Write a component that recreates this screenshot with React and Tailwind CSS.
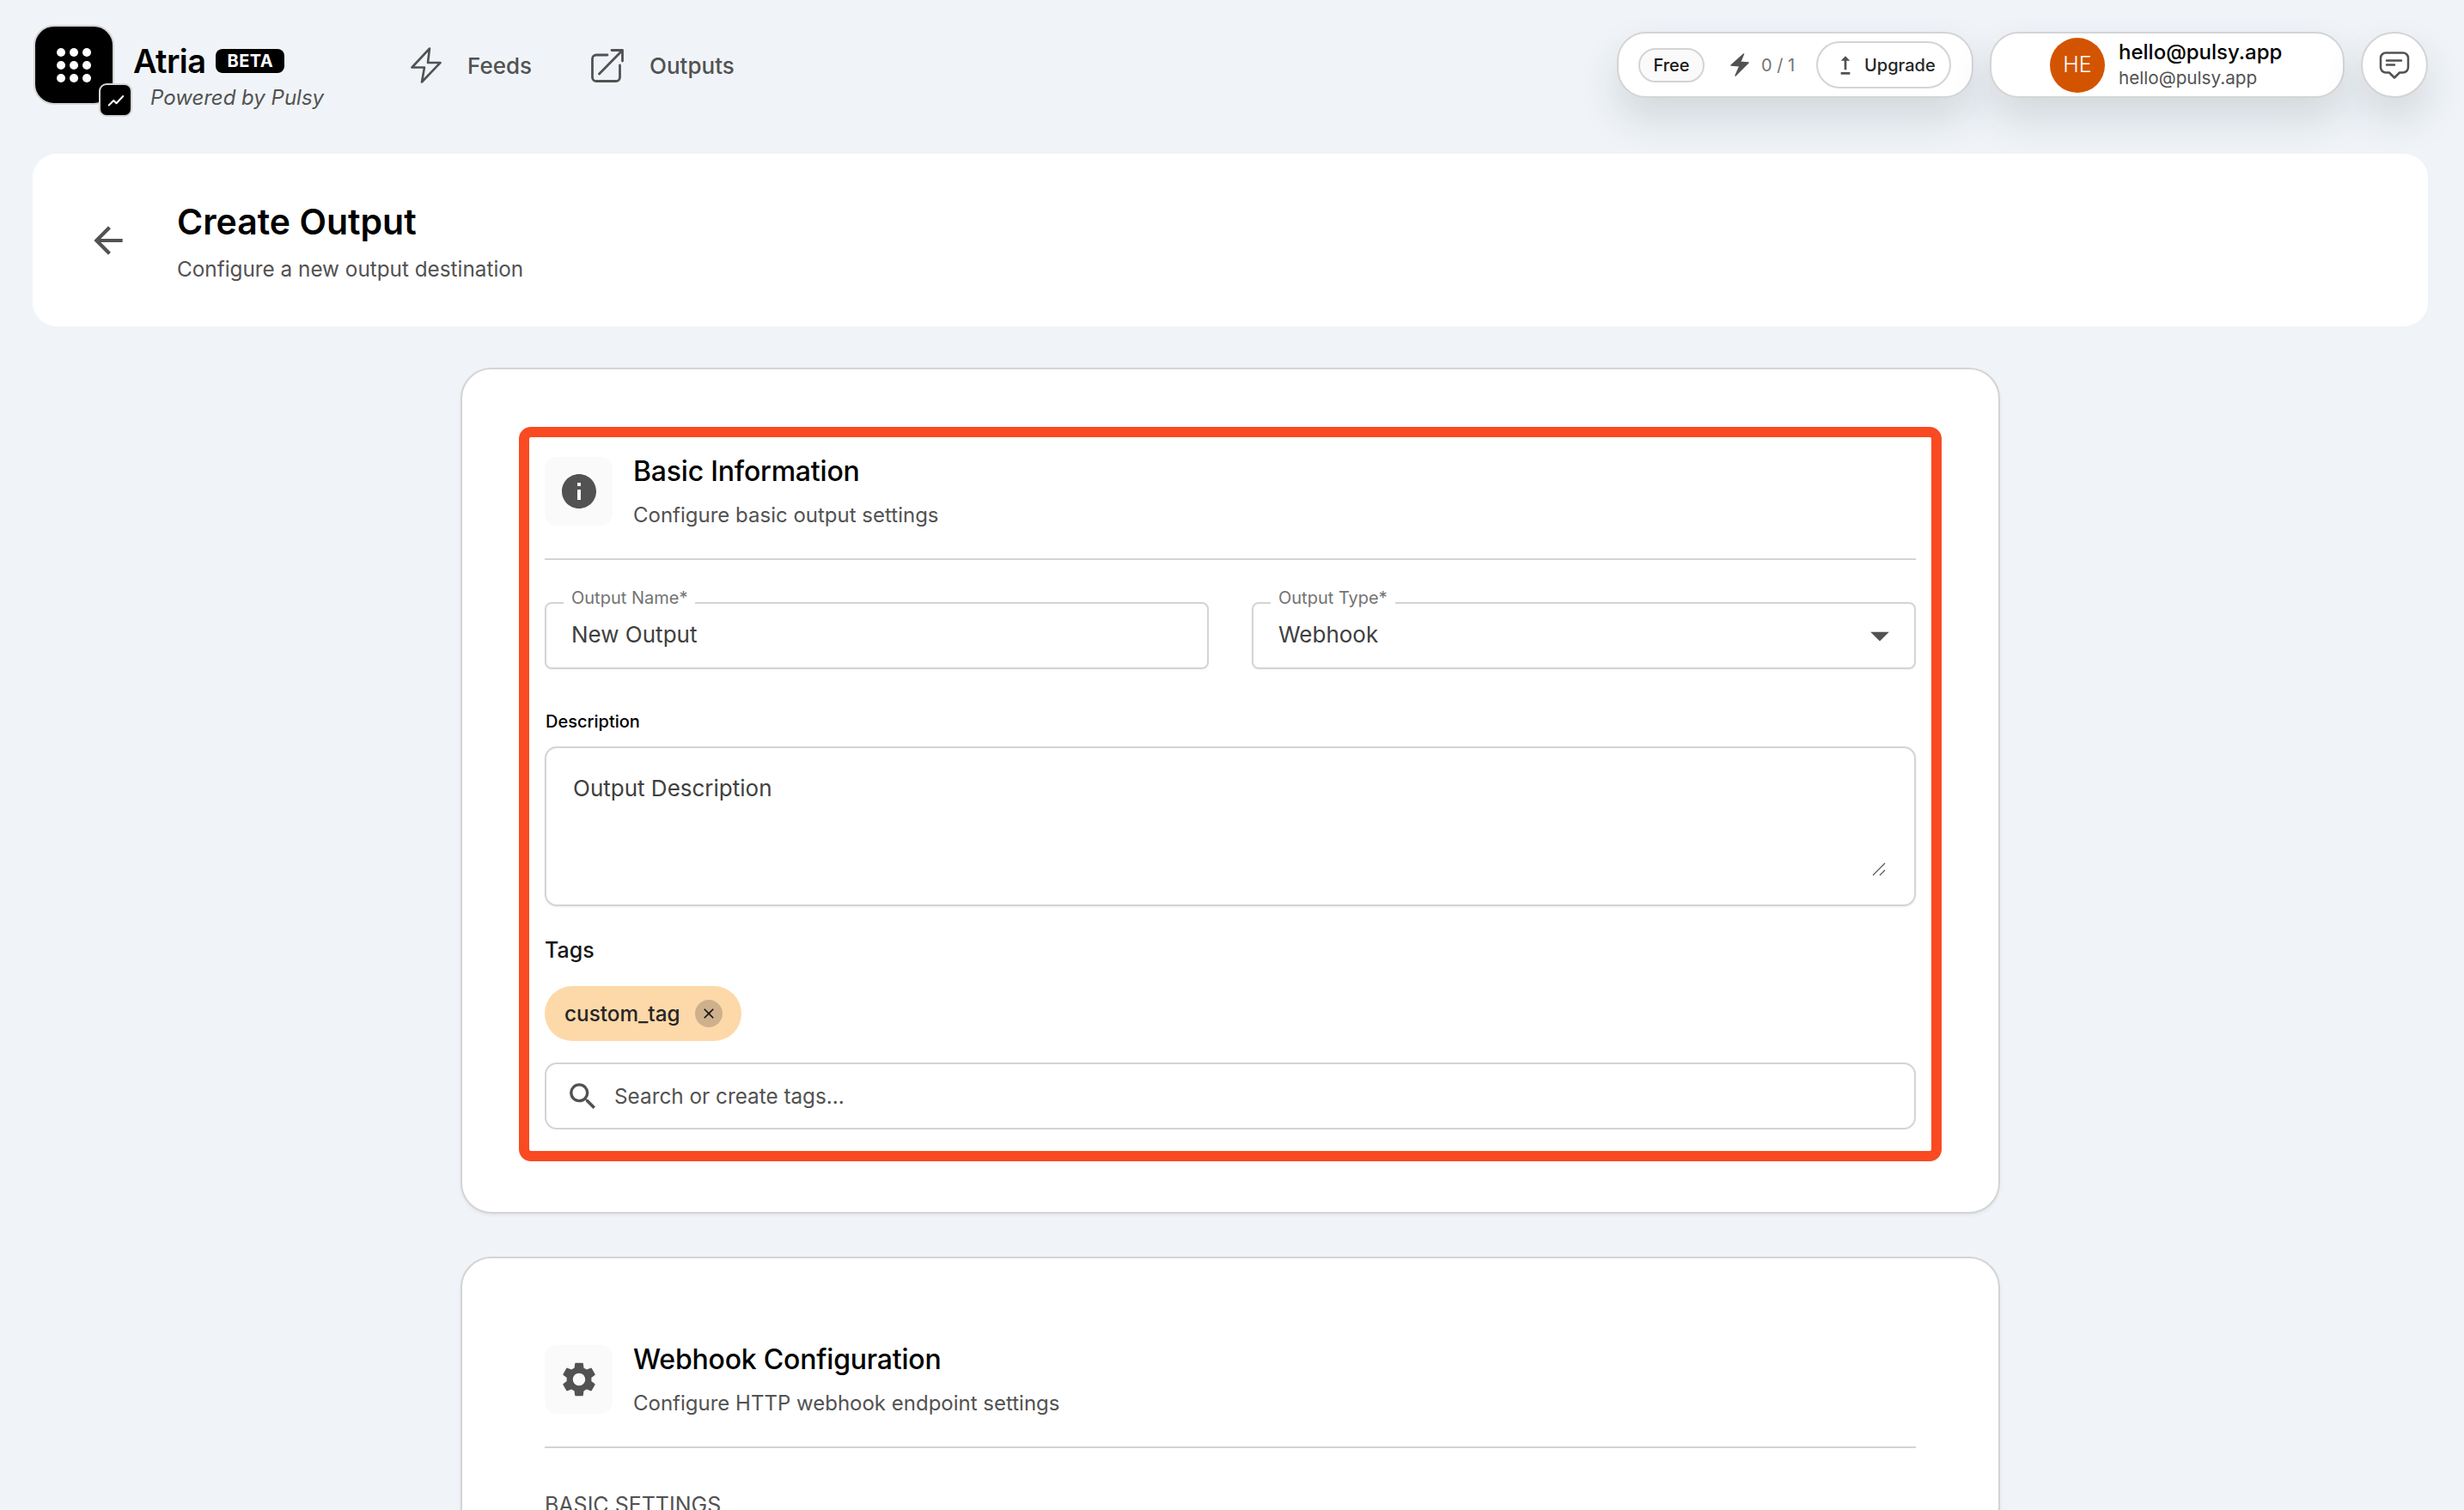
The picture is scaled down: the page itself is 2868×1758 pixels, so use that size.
import { MdArrowBack, MdArrowDropDown, MdClose, MdInfo, MdSearch, MdSettings, MdUpgrade } from "react-icons/md"

const font = { fontFamily: "Inter, 'Noto Sans', sans-serif" }

function Logo() {
  return (
    <div className="relative w-[94px] h-[93px] shrink-0 bg-black rounded-[24px] border-[2px] border-[#d4d4d4] flex items-center justify-center">
      <div className="grid grid-cols-3 gap-x-[5px] gap-y-[5px]">
        {[1, 2, 3, 4, 5, 6, 7, 8, 9].map((i) => (
          <span key={i} className="w-[10px] h-[10px] rounded-full bg-white" />
        ))}
      </div>
      <div className="absolute left-[74px] top-[66px] w-[39px] h-[39px] bg-black rounded-[9px] border-[2px] border-[#d4d4d4] flex items-center justify-center">
        <svg width="22" height="22" viewBox="0 0 24 24" fill="none" stroke="white" strokeWidth="2.2" strokeLinecap="round" strokeLinejoin="round">
          <path d="M3 18l6-6 3.5 3.5L21 6.5" />
        </svg>
      </div>
    </div>
  )
}

function NavItem({ icon, label }) {
  return (
    <div className="flex items-center gap-[30px] text-[#525252] text-[26px] font-medium">
      {icon}
      <span className="mt-[2px]">{label}</span>
    </div>
  )
}

function Pill({ className, children }) {
  return (
    <div className={`h-[77px] bg-white border-[2px] border-[#d4d4d4] shadow-[0_24px_48px_rgba(30,40,60,0.14)] flex items-center ${className}`}>
      {children}
    </div>
  )
}

function TopBar() {
  return (
    <div className="flex items-center h-[179px] pt-[29px] pb-[57px] pl-[39px] pr-[42px]">
      <Logo />
      <div className="w-[245px] ml-[22px] mt-[28px] shrink-0">
        <div className="flex items-center gap-[12px] h-[40px]">
          <span className="text-[38px] font-semibold text-black leading-none tracking-[-0.6px]">Atria</span>
          <span className="w-[80px] h-[28px] bg-black rounded-[8px] text-white text-[20px] font-bold flex items-center justify-center tracking-[0.4px]">BETA</span>
        </div>
        <div className="ml-[20px] mt-[8px] text-[24px] italic text-[#525252] leading-[30px] whitespace-nowrap">Powered by Pulsy</div>
      </div>
      <div className="flex items-center gap-[69px] ml-[78px]">
        <NavItem
          label="Feeds"
          icon={
            <svg width="36" height="42" viewBox="0 0 36 42" fill="none" stroke="#525252" strokeWidth="2.6" strokeLinejoin="round">
              <path d="M22 1.5 1.5 23.5H16L13 40.5 34.5 18H20z" />
            </svg>
          }
        />
        <NavItem
          label="Outputs"
          icon={
            <svg width="38" height="40" viewBox="0 0 38 40" fill="none" stroke="#525252" strokeWidth="2.8" strokeLinecap="round" strokeLinejoin="round">
              <path d="M19 8H6a4.500 4.500 0 0 0-4.500 4.500V34a4.500 4.500 0 0 0 4.500 4.500h23a4.500 4.500 0 0 0 4.500-4.500V20" />
              <path d="M9.500 30 36.500 2.500M24 2.500h12.500V15" />
            </svg>
          }
        />
      </div>
      <div className="ml-auto flex items-center gap-[19px]">
        <Pill className="w-[415px] rounded-[34px] pl-[23px] pr-[24px]">
          <span className="w-[77px] h-[40px] rounded-full border-[2px] border-[#d4d4d4] bg-[#fafafa] text-[20px] font-medium text-[#171717] flex items-center justify-center">Free</span>
          <svg className="ml-[30px] shrink-0" width="22" height="27" viewBox="0 0 22 27" fill="#525252" stroke="#525252" strokeWidth="1.5" strokeLinejoin="round">
            <path d="M15.500 1 1 14l10 .8L6 26l15-15-9.500-.8z" />
          </svg>
          <span className="ml-[14px] text-[20px] text-[#737373] whitespace-nowrap">0 / 1</span>
          <div className="ml-auto w-[157px] h-[55px] rounded-full border-[2px] border-[#d4d4d4] flex items-center pl-[16px] gap-[6px]">
            <MdUpgrade size={32} className="text-[#525252] shrink-0" />
            <span className="text-[20px] font-medium text-[#262626]">Upgrade</span>
          </div>
        </Pill>
        <Pill className="w-[413px] rounded-[34px] pl-[68px]">
          <span className="w-[64px] h-[64px] rounded-full bg-[#d35400] text-white text-[25px] font-light flex items-center justify-center">HE</span>
          <div className="ml-[16px] flex flex-col">
            <span className="text-[24px] font-medium text-black leading-[30px]">hello@pulsy.app</span>
            <span className="text-[20.700px] text-[#525252] leading-[29px]">hello@pulsy.app</span>
          </div>
        </Pill>
        <Pill className="w-[78px] rounded-full justify-center">
          <svg width="36" height="32" viewBox="0 0 36 32" fill="none" stroke="#525252" strokeWidth="2.5" strokeLinecap="round" strokeLinejoin="round">
            <path d="M8 1.500h20a6 6 0 0 1 6 6v11a6 6 0 0 1-6 6h-4l-6 6-6-6H8a6 6 0 0 1-6-6v-11a6 6 0 0 1 6-6z" />
            <path d="M9 10.500h17M9 15.500h9" />
          </svg>
        </Pill>
      </div>
    </div>
  )
}

function PageHeader() {
  return (
    <div className="ml-[38px] mr-[42px] h-[201px] bg-white rounded-[28px] flex items-center pl-[63px]">
      <MdArrowBack size={50} className="text-[#525252] shrink-0" />
      <div className="ml-[55px] mt-[5px] flex flex-col">
        <h1 className="text-[41px] font-semibold text-black leading-[48px]">Create Output</h1>
        <p className="text-[24.300px] text-[#525252] leading-[34px] mt-[14px]">Configure a new output destination</p>
      </div>
    </div>
  )
}

function SectionHeader({ icon, title, subtitle }) {
  return (
    <div className="border-b-[2px] border-[#d4d4d4] pb-[38px]">
      <div className="flex gap-[24px] h-[80px]">
        <div className="w-[79px] h-[80px] rounded-[14px] bg-[#fafafa] flex items-center justify-center text-[#525252]">{icon}</div>
        <div className="flex flex-col -mt-[3px]">
          <span className="text-[32px] font-medium text-black leading-[40px] tracking-[-0.2px]">{title}</span>
          <span className="text-[24px] text-[#525252] leading-[32px] mt-[15px]">{subtitle}</span>
        </div>
      </div>
    </div>
  )
}

function OutlinedField({ label, value, children }) {
  return (
    <div className="relative flex-1 h-[78px] rounded-[8px] border-[2px] border-[#d4d4d4] shadow-[0_1px_2px_rgba(0,0,0,0.05)] flex items-center pl-[29px] pr-[14px]">
      <span className="absolute left-[20px] -top-[17px] px-[9px] bg-white text-[20px] leading-[20px] text-[#737373] whitespace-nowrap">{label}</span>
      <span className="text-[26px] text-[#404040] leading-none -mt-[3px]">{value}</span>
      {children}
    </div>
  )
}

function Card({ children }) {
  return (
    <div className="w-[1792px] mx-auto shrink-0 bg-white rounded-[36px] border-[2px] border-[#d4d4d4] shadow-[0_2px_4px_rgba(0,0,0,0.06)] pt-[67px] px-[66px] pb-[59px]">
      {children}
    </div>
  )
}

export default function App() {
  return (
    <div className="w-full h-[1758px] overflow-hidden bg-[#f0f4f8]" style={font}>
      <TopBar />
      <PageHeader />
      <div className="mt-[48px] pl-[38px] pr-[42px] flex flex-col gap-[50px]">
        <Card>
          <div className="border-[12px] border-[#f94a22] rounded-[14px] px-[18px] pt-[23px] pb-[25px]">
            <SectionHeader
              icon={<MdInfo size={48} />}
              title="Basic Information"
              subtitle="Configure basic output settings"
            />
            <div className="flex gap-[50px] mt-[49px]">
              <OutlinedField label="Output Name*" value="New Output" />
              <OutlinedField label="Output Type*" value="Webhook">
                <MdArrowDropDown size={52} className="ml-auto text-[#525252]" />
              </OutlinedField>
            </div>
            <label className="block mt-[49px] text-[20px] font-medium text-black leading-[24px] ml-[1px]">Description</label>
            <div className="relative mt-[17px] h-[186px] rounded-[14px] border-[2px] border-[#d4d4d4] shadow-[0_1px_3px_rgba(0,0,0,0.08)] pl-[31px] pt-[30px]">
              <span className="block text-[26px] text-[#404040] leading-[34px]">Output Description</span>
              <svg className="absolute right-[33px] bottom-[33px]" width="16" height="16" viewBox="0 0 16 16" fill="none" stroke="#525252" strokeWidth="1.2">
                <path d="M1 15 15 1M9 15l6-6" />
              </svg>
            </div>
            <div className="mt-[36px] text-[25px] font-medium text-[#171717] leading-[30px]">Tags</div>
            <div className="mt-[27px] w-[229px] h-[64px] rounded-full bg-[#fdd9a9] flex items-center pl-[23px]">
              <span className="text-[24.300px] font-medium text-[#262626] leading-none">custom_tag</span>
              <span className="ml-[17px] w-[32px] h-[32px] rounded-full bg-[#cfb08d] flex items-center justify-center">
                <MdClose size={20} className="text-[#171717]" />
              </span>
            </div>
            <div className="mt-[25px] h-[78px] rounded-[14px] border-[2px] border-[#d4d4d4] flex items-center pl-[22px]">
              <MdSearch size={41} className="text-[#525252] shrink-0" />
              <span className="ml-[16px] text-[24.300px] text-[#525252]">Search or create tags...</span>
            </div>
          </div>
        </Card>
        <Card>
          <div className="border-[12px] border-transparent px-[18px] pt-[22px]">
            <SectionHeader
              icon={<MdSettings size={48} />}
              title="Webhook Configuration"
              subtitle="Configure HTTP webhook endpoint settings"
            />
            <div className="mt-[51px] text-[25px] text-[#525252] leading-[30px]">BASIC SETTINGS</div>
          </div>
        </Card>
      </div>
    </div>
  )
}
